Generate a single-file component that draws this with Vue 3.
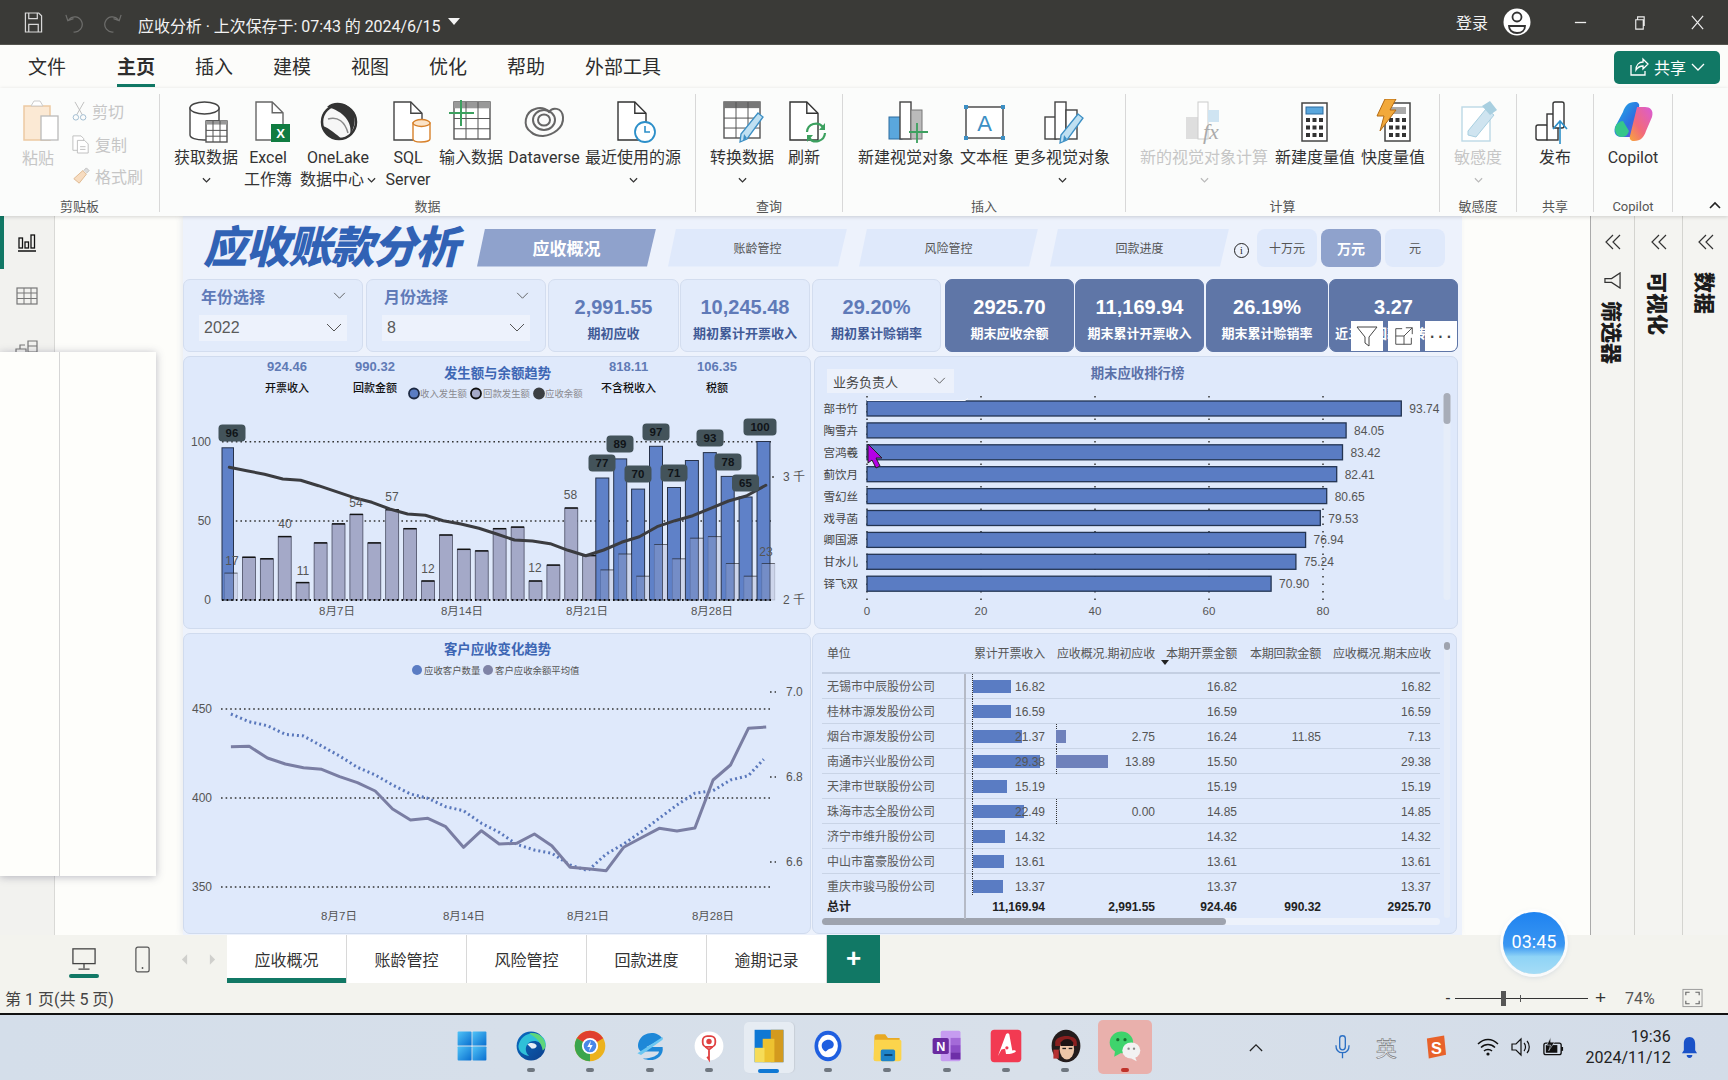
<script setup>
const zx1 = x => +(170 + x / 2.412).toFixed(1)
const zy1 = y => +(210 + y / 3).toFixed(1)
const zy3 = y => +(630 + y / 3).toFixed(1)

const doc = (x, y, w, h, c = '#444') =>
  `<path d="M${x} ${y}h${w * 0.6}l${w * 0.4} ${w * 0.4}V${y + h}H${x}Z" fill="#fff" stroke="${c}" stroke-width="1.4"/><path d="M${x + w * 0.6} ${y}v${w * 0.4}h${w * 0.4}" fill="none" stroke="${c}" stroke-width="1.4"/>`
const grid = (x, y, w, h, c = '#555', head = '#999') => {
  let s = `<rect x="${x}" y="${y}" width="${w}" height="${h}" fill="#fff" stroke="${c}" stroke-width="1.4"/><rect x="${x}" y="${y}" width="${w}" height="${h * 0.17}" fill="${head}"/>`
  for (let i = 1; i < 3; i++) s += `<path d="M${x + (w * i) / 3} ${y}v${h}" stroke="${c}" stroke-width="1"/>`
  for (let i = 1; i < 3; i++) s += `<path d="M${x} ${y + h * 0.17 + ((h * 0.83) * i) / 3}h${w}" stroke="${c}" stroke-width="1"/>`
  return s
}
const pencil = (x, y, c = '#3c8fc4') =>
  `<path d="M${x + 16} ${y}l5 4-16 22-7 3 1-8Z" fill="#bfe0f2" stroke="${c}" stroke-width="1.3"/><path d="M${x + 2} ${y + 21}l3 4-4 3Z" fill="${c}"/>`
const calc = (x, y, top) => {
  let s = `<rect x="${x}" y="${y}" width="25" height="38" fill="#fff" stroke="#444" stroke-width="1.5"/>`
  s += top
  for (let r = 0; r < 3; r++) for (let c = 0; c < 3; c++)
    s += `<rect x="${x + 4 + c * 6.5}" y="${y + 15 + r * 7.5}" width="4" height="4" fill="#333"/>`
  return s
}

const icons = {
  cyl: `<path d="M8 9v27c0 3 6 5 14 5h3V22h12V9Z" fill="#fff" stroke="#444" stroke-width="1.4"/><ellipse cx="22.500" cy="9" rx="14.500" ry="6" fill="#fff" stroke="#444" stroke-width="1.4"/>${grid(24, 22, 21, 21)}`,
  excel: `${doc(12, 3, 27, 38, '#666')}<rect x="27" y="25" width="19" height="18" fill="#107c41"/><text x="36.500" y="39" font-size="13" font-weight="700" text-anchor="middle" fill="#fff" font-family="Liberation Sans">X</text>`,
  lake: `<circle cx="25" cy="23" r="17" fill="#f6f6f6" stroke="#333" stroke-width="2.500"/><path d="M13 8C21 0 37 4 40 16c2 8-1 15-4 20 3-12-6-24-23-28Z" fill="#333"/><path d="M9 27c6 2 14 9 19 13-9 2-16-3-19-13Z" fill="#333"/><path d="M14 20c10-3 17 3 20 14" stroke="#888" fill="none" stroke-width="1.5"/>`,
  sql: `${doc(10, 3, 28, 38, '#444')}<path d="M29 24v16c0 2 4 3 8 3s9-1 9-3V24Z" fill="#fff" stroke="#d8822c" stroke-width="1.4"/><ellipse cx="37.500" cy="24" rx="8.500" ry="3.500" fill="#fbe3c8" stroke="#d8822c" stroke-width="1.4"/>`,
  enter: `${grid(7, 3, 36, 37, '#555', '#999')}<path d="M14 1v26M2 14h25" stroke="#3ca05f" stroke-width="2" fill="none"/>`,
  dv: `<g fill="none" stroke="#666" stroke-width="2"><path d="M11 33C2 27 5 13 15 10c6-2 11 0 14 3 3-5 13-5 14 5 1 11-10 18-20 19-5 0-9-1-12-4Z"/><ellipse cx="24" cy="21" rx="11" ry="10"/><ellipse cx="24" cy="21" rx="6" ry="5.500"/></g>`,
  recent: `${doc(9, 3, 28, 38, '#333')}<circle cx="36" cy="33" r="10" fill="#fff" stroke="#2c8fc9" stroke-width="1.8"/><path d="M36 27v6h5" fill="none" stroke="#2c8fc9" stroke-width="1.6"/>`,
  transform: `${grid(6, 3, 36, 36, '#555', '#777')}${pencil(24, 14)}`,
  refresh: `${doc(10, 3, 28, 38, '#333')}<g fill="none" stroke="#3ca05f" stroke-width="2.200"><path d="M27 33a9 9 0 0 1 16-5"/><path d="M45 34a9 9 0 0 1-16 5"/></g><path d="M45 24v7h-6ZM27 43v-7h6Z" fill="#3ca05f"/>`,
  newvis: `<rect x="7" y="18" width="13" height="22" fill="#5aa7dd" stroke="#2c6ca0"/><rect x="18" y="3" width="11" height="37" fill="#fff" stroke="#444" stroke-width="1.4"/><rect x="29" y="11" width="11" height="29" fill="#bbb" stroke="#777"/><path d="M35 24v20M27 33h19" stroke="#3ca05f" stroke-width="1.8" fill="none"/>`,
  textbox: `<rect x="6" y="8" width="37" height="31" fill="#fff" stroke="#333" stroke-width="1.3"/><g fill="#3c8fc4"><rect x="4" y="6" width="4" height="4"/><rect x="41" y="6" width="4" height="4"/><rect x="4" y="37" width="4" height="4"/><rect x="41" y="37" width="4" height="4"/></g><text x="24.500" y="32" font-size="22" text-anchor="middle" fill="#3c8fc4" font-family="Liberation Sans">A</text>`,
  morevis: `<rect x="7" y="18" width="11" height="22" fill="#fff" stroke="#444" stroke-width="1.4"/><rect x="17" y="3" width="11" height="37" fill="#fff" stroke="#444" stroke-width="1.4"/><rect x="28" y="11" width="11" height="29" fill="#fff" stroke="#444" stroke-width="1.4"/>${pencil(24, 15)}`,
  fx: `<rect x="6" y="18" width="12" height="22" fill="#dedede"/><rect x="18" y="3" width="10" height="37" fill="#fff" stroke="#ccc"/><rect x="28" y="11" width="11" height="12" fill="#cfe4f2"/><text x="23" y="40" font-size="22" font-style="italic" fill="#aaa" font-family="Liberation Serif">fx</text>`,
  measure: calc(11, 4, '<rect x="15" y="8" width="17" height="7" fill="#5aa7dd" stroke="#2c6ca0"/>'),
  quick: calc(16, 4, '<rect x="20" y="8" width="17" height="7" fill="#aaa"/>') + `<path d="M16 0h11l-6 11h6L11 32l4-15H8Z" fill="#f2a93b" stroke="#b36a12" stroke-width="1"/>`,
  sens: `<rect x="8" y="8" width="28" height="34" fill="#fff" stroke="#bcd9e6" stroke-width="1.4"/><path d="M14 32l18-22 8 6-18 22-8-2Z" fill="#cfe4f0" stroke="#a8cfe0"/><path d="M28 7l8-5 7 9-7 5Z" fill="#a8cfe0"/>`,
  publish: `<rect x="5" y="26" width="12" height="15" rx="2" fill="#fff" stroke="#333" stroke-width="1.4"/><rect x="16" y="15" width="11" height="26" fill="#fff" stroke="#333" stroke-width="1.4"/><rect x="22" y="3" width="11" height="26" rx="2" fill="#fff" stroke="#333" stroke-width="1.4"/><path d="M29 45V22m-7 8 7-8 7 8" fill="none" stroke="#2c8fc9" stroke-width="1.6"/>`,
  copilot: `<defs><linearGradient id="cpa" x1="0" y1="0" x2="1" y2="1"><stop offset="0" stop-color="#1fb6e8"/><stop offset="0.6" stop-color="#2e6fe0"/><stop offset="1" stop-color="#8a4bd8"/></linearGradient><linearGradient id="cpb" x1="1" y1="0" x2="0" y2="1"><stop offset="0" stop-color="#d95bd6"/><stop offset="0.6" stop-color="#f26a7a"/><stop offset="1" stop-color="#f8a63a"/></linearGradient></defs><path d="M26 3c-7 0-10 4-12 10L6 28c-2 7 2 10 7 10h9l8-30c1-3-1-5-4-5Z" fill="url(#cpa)"/><path d="M14 22c-3 0-8 3-8 8s3 8 7 8c4 0 6-3 7-6Z" fill="#36c68a"/><path d="M25 42c7 0 10-4 12-10l6-14c2-7-2-10-7-10h-8l-7 29c-1 3 1 5 4 5Z" fill="url(#cpb)"/>`,
}

const groups = [
  { w: 536, pad: 14, label: '数据', items: [
    { w: 64, icon: 'cyl', a: '获取数据', chev: true },
    { w: 60, icon: 'excel', a: 'Excel', b: '工作簿' },
    { w: 80, icon: 'lake', a: 'OneLake', b: '数据中心', bc: true },
    { w: 60, icon: 'sql', a: 'SQL', b: 'Server' },
    { w: 66, icon: 'enter', a: '输入数据' },
    { w: 80, icon: 'dv', a: 'Dataverse' },
    { w: 98, icon: 'recent', a: '最近使用的源', chev: true },
  ] },
  { w: 147, pad: 10, label: '查询', items: [
    { w: 72, icon: 'transform', a: '转换数据', chev: true },
    { w: 52, icon: 'refresh', a: '刷新' },
  ] },
  { w: 283, pad: 14, label: '插入', items: [
    { w: 98, icon: 'newvis', a: '新建视觉对象' },
    { w: 58, icon: 'textbox', a: '文本框' },
    { w: 98, icon: 'morevis', a: '更多视觉对象', chev: true },
  ] },
  { w: 314, pad: 13, label: '计算', items: [
    { w: 130, icon: 'fx', a: '新的视觉对象计算', chev: true, off: true },
    { w: 92, icon: 'measure', a: '新建度量值' },
    { w: 64, icon: 'quick', a: '快度量值' },
  ] },
  { w: 77, pad: 0, label: '敏感度', items: [{ w: 76, icon: 'sens', a: '敏感度', chev: true, off: true }] },
  { w: 77, pad: 0, label: '共享', items: [{ w: 76, icon: 'publish', a: '发布' }] },
  { w: 79, pad: 0, label: 'Copilot', items: [{ w: 78, icon: 'copilot', a: 'Copilot' }] },
]

const menus = ['文件', '主页', '插入', '建模', '视图', '优化', '帮助', '外部工具']
const navs = ['应收概况', '账龄管控', '风险管控', '回款进度']
const pages = ['应收概况', '账龄管控', '风险管控', '回款进度', '逾期记录']

const kpis = [
  { v: '2,991.55', l: '期初应收', w: 131, m: 2 },
  { v: '10,245.48', l: '期初累计开票收入', w: 130, m: 1 },
  { v: '29.20%', l: '期初累计赊销率', w: 129, m: 2 },
  { v: '2925.70', l: '期末应收余额', w: 129, m: 4, dark: true },
  { v: '11,169.94', l: '期末累计开票收入', w: 129, m: 1, dark: true },
  { v: '26.19%', l: '期末累计赊销率', w: 122, m: 2, dark: true },
  { v: '3.27', l: '近三月回款周转天数', w: 129, m: 1, dark: true, last: true },
]

const greys = [17,27,26,40,11,36,48,54,36,57,45,12,41,32,31,45,46,12,22,58,28,19,29,15,35,26,39,40,23,15,23]
const blues = { 0: 96, 21: 77, 22: 89, 23: 70, 24: 97, 25: 71, 26: 88, 27: 93, 28: 78, 29: 65, 30: 100 }
const vy = v => +(600 - v * 1.585).toFixed(1)
const greyBars = greys.map((v, i) => ({ x: +(224.5 + 17.91 * i).toFixed(1), y: vy(v), h: +(v * 1.585).toFixed(1), over: i >= 21 || i === 0 }))
const blueBars = Object.entries(blues).map(([i, v]) => ({ x: i == 0 ? 222 : +(224.5 + 17.91 * i - 4.8).toFixed(1), y: vy(v), h: +(v * 1.585).toFixed(1), w: i == 0 ? 11.5 : 13 }))
const line1 = [[143,772],[185,782],[228,793],[272,807],[315,811],[358,827],[401,845],[444,863],[487,877],[530,897],[573,912],[616,916],[659,932],[702,942],[745,955],[788,972],[831,990],[874,993],[917,1001],[960,1021],[1003,1037],[1046,1020],[1089,997],[1132,980],[1175,950],[1218,932],[1261,917],[1304,895],[1347,873],[1390,858],[1437,826]]
  .map(([x, y]) => `${zx1(x)},${zy1(y)}`).join(' ')
const pills = [[232,433,'96',27],[602,463,'77',27],[620,444,'89',27],[638,474,'70',27],[656,432,'97',27],[674,473,'71',27],[710,438,'93',27],[728,462,'78',27],[745.5,483,'65',27],[760,427,'100',33]]
const plain = [[232,561,'17'],[285,524,'40'],[303,571,'11'],[356,503,'54'],[392,497,'57'],[428,569,'12'],[535,568,'12'],[570.5,495,'58'],[766,552,'23']]
const heads = [
  { x: 287, v: '924.46', l: '开票收入' },
  { x: 375, v: '990.32', l: '回款金额' },
  { x: 628.6, v: '818.11', l: '不含税收入' },
  { x: 717, v: '106.35', l: '税额' },
]
const legend1 = [
  { cx: 414, tx: 420, f: '#5a7cc3', s: '#1e2a44', t: '收入发生额' },
  { cx: 476, tx: 483, f: '#a5aac8', s: '#111', t: '回款发生额' },
  { cx: 539, tx: 545, f: '#3c3f42', s: '#3c3f42', t: '应收余额' },
]
const ticks = [[337, '8月7日'], [462, '8月14日'], [587, '8月21日'], [712, '8月28日']]

const people = [['部书竹',93.74],['陶雪卉',84.05],['宫鸿羲',83.42],['蓟饮月',82.41],['雪幻丝',80.65],['戏寻菡',79.53],['卿国源',76.94],['甘水儿',75.24],['铎飞双',70.90]]
  .map(([n, v], i) => ({ n, v, y: +(401 + i * 21.9).toFixed(1), w: +(v * 5.7).toFixed(1) }))
const rankX = [867, 981, 1095, 1209, 1323]

const solid = [[147,350],[191,349],[235,384],[278,402],[322,413],[366,418],[409,440],[452,458],[495,483],[537,537],[580,570],[622,565],[665,590],[708,652],[751,602],[794,642],[836,640],[879,612],[921,647],[965,712],[1008,716],[1052,722],[1094,652],[1137,623],[1180,595],[1223,603],[1266,594],[1310,450],[1352,405],[1395,295],[1438,291]]
  .map(([x, y]) => `${zx1(x)},${zy3(y)}`).join(' ')
const dotted = [[147,252],[191,275],[235,287],[278,313],[322,318],[366,348],[409,378],[452,412],[495,435],[537,465],[580,492],[622,505],[665,530],[708,542],[751,580],[794,607],[836,643],[879,660],[921,670],[965,705],[1008,722],[1052,672],[1094,642],[1137,605],[1180,565],[1223,525],[1266,490],[1310,482],[1352,450],[1395,437],[1432,388]]
  .map(([x, y]) => `${zx1(x)},${zy3(y)}`).join(' ')
const ticks3 = [[339, '8月7日'], [464, '8月14日'], [588, '8月21日'], [713, '8月28日']]

const rows = [
  ['无锡市中辰股份公司', 16.82, null, '16.82', '', '16.82'],
  ['桂林市源发股份公司', 16.59, null, '16.59', '', '16.59'],
  ['烟台市源发股份公司', 21.37, 2.75, '16.24', '11.85', '7.13'],
  ['南通市兴业股份公司', 29.38, 13.89, '15.50', '', '29.38'],
  ['天津市世联股份公司', 15.19, null, '15.19', '', '15.19'],
  ['珠海市志全股份公司', 22.49, 0, '14.85', '', '14.85'],
  ['济宁市维升股份公司', 14.32, null, '14.32', '', '14.32'],
  ['中山市富豪股份公司', 13.61, null, '13.61', '', '13.61'],
  ['重庆市骏马股份公司', 13.37, null, '13.37', '', '13.37'],
]

const tray = [
  `<defs><linearGradient id="w1" x1="0" y1="0" x2="1" y2="1"><stop offset="0" stop-color="#4fc3f7"/><stop offset="1" stop-color="#0a6fd0"/></linearGradient></defs><rect x="4" y="4" width="15.500" height="15.500" rx="1" fill="url(#w1)"/><rect x="20.500" y="4" width="15.500" height="15.500" rx="1" fill="url(#w1)"/><rect x="4" y="20.500" width="15.500" height="15.500" rx="1" fill="url(#w1)"/><rect x="20.500" y="20.500" width="15.500" height="15.500" rx="1" fill="url(#w1)"/>`,
  `<defs><linearGradient id="e1" x1="0" y1="0" x2="1" y2="1"><stop offset="0" stop-color="#0a6cc2"/><stop offset="1" stop-color="#0c3f8c"/></linearGradient></defs><circle cx="20" cy="20" r="16" fill="url(#e1)"/><path d="M6 20C8 8 20 3 30 8c6 3 8 10 5 15-4-9-14-11-19-5-3 4-2 10 2 13-7-1-12-5-12-11Z" fill="#2fc0d8"/><path d="M18 6c8-2 17 3 18 13 0 3-1 5-3 6-1-9-8-15-15-19Z" fill="#5fd67a"/><path d="M16 18c3-2 8-2 10 1 1 3-2 4-5 4" fill="#fff" opacity=".9"/>`,
  `<circle cx="20" cy="20" r="17" fill="#ecb21d"/><path d="M20 20 5.300 11.500A17 17 0 0 1 34.700 11.500Z" fill="#e0402e"/><path d="M20 20 5.300 11.500A17 17 0 0 0 20 37Z" fill="#3aa54d"/><circle cx="20" cy="20" r="8" fill="#4a87e8" stroke="#fff" stroke-width="2"/><path d="M21 14l-4 7h3l-1 5 4-7h-3Z" fill="#fff"/>`,
  `<path d="M8 14C12 4 28 2 34 12L16 21 34 21C36 32 24 39 12 34 22 34 30 30 30 26H10C6 24 6 18 8 14Z" fill="#1e88d8"/><path d="M6 28 34 10 34 13 10 30Z" fill="#6bc7f2"/>`,
  `<circle cx="20" cy="20" r="16" fill="#fff"/><rect x="13" y="9" width="14" height="12" rx="5" fill="none" stroke="#e04040" stroke-width="2"/><circle cx="20" cy="15" r="3" fill="#e04040"/><path d="M16 21l4 3 4-3M20 24v11l-2-3" fill="none" stroke="#e04040" stroke-width="2"/>`,
  `<rect x="4" y="2" width="32" height="36" fill="#0f78d4"/><rect x="22" y="2" width="14" height="36" fill="#d39a1e"/><rect x="13" y="12" width="13" height="26" fill="#edc230"/><rect x="4" y="22" width="11" height="16" fill="#f6dc58"/>`,
  `<ellipse cx="20" cy="20" rx="15" ry="17" fill="#1f5fe0"/><ellipse cx="20" cy="20" rx="11" ry="12.500" fill="#fff"/><path d="M13 20c0-6 8-9 12-5 3 3 1 8-3 8-2 0-3 3-5 3-2-1-4-3-4-6Z" fill="#1f5fe0"/>`,
  `<path d="M6 10c0-2 1-3 3-3h9l3 4h13v25H6Z" fill="#e8a923"/><path d="M6 13h28c1 0 2 1 2 2v19c0 2-1 3-3 3H8c-2 0-3-1-3-3Z" fill="#fbd44c"/><rect x="13" y="24" width="16" height="13" rx="2" fill="#1e84c9"/><rect x="17" y="29" width="9" height="2" fill="#0a3f6a"/>`,
  `<rect x="13" y="3" width="22" height="34" rx="2" fill="#c69cf0"/><rect x="24" y="11" width="11" height="8" fill="#a46ad8"/><rect x="24" y="19" width="11" height="8" fill="#8c4dc6"/><rect x="24" y="27" width="11" height="8" fill="#6e2ea8"/><rect x="4" y="11" width="18" height="18" rx="2" fill="#6a2aa0"/><text x="13" y="25" font-size="14" font-weight="700" text-anchor="middle" fill="#fff" font-family="Liberation Sans">N</text>`,
  `<rect x="3" y="2" width="34" height="36" rx="4" fill="#f23a52"/><path d="M11 31 20 7c2-2 4-1 4 2l3 16c3-1 4 0 4 1-4 3-8 3-11 3l-1-6-4 1-4 7Z" fill="#fff"/><circle cx="21" cy="22" r="1.800" fill="#f23a52"/>`,
  `<ellipse cx="20" cy="20" rx="16" ry="18" fill="#241c1c"/><path d="M8 16c0-9 24-10 24 0v4H8Z" fill="#8a1f1f"/><ellipse cx="21" cy="24" rx="8" ry="11" fill="#edc6a8"/><path d="M14 16c4-5 11-5 14 0v4H14Z" fill="#1c1414"/><path d="M6 24h6v10H6Z" fill="#b53030"/><rect x="16" y="22" width="4" height="1.500" fill="#222"/><rect x="23" y="22" width="4" height="1.500" fill="#222"/>`,
  `<ellipse cx="16" cy="16" rx="13" ry="12" fill="#3fd36c"/><path d="M9 25l-1 7 7-4Z" fill="#3fd36c"/><circle cx="12" cy="13" r="1.800" fill="#16732f"/><circle cx="20" cy="13" r="1.800" fill="#16732f"/><ellipse cx="27" cy="25" rx="10" ry="9" fill="#f2f2f2"/><path d="M31 32l2 5-6-3Z" fill="#f2f2f2"/><circle cx="24" cy="23" r="1.300" fill="#888"/><circle cx="30" cy="23" r="1.300" fill="#888"/>`,
]
</script>

<template>
  <div class="app">
    <header class="title">
      <svg class="ti ti-save" viewBox="0 0 20 24"><path d="M1.500 2h14l3 3v17h-17Z" fill="none" stroke="#d8d8d8" stroke-width="1.300"/><path d="M5 2v6h9V2M5 22v-8h10v8" fill="none" stroke="#d8d8d8" stroke-width="1.300"/></svg>
      <svg class="ti ti-undo" viewBox="0 0 20 24"><path d="M5 9a8 8 0 1 1 5 13M2 4l2 6 6-2" fill="none" stroke="#6d6d6b" stroke-width="1.300"/></svg>
      <svg class="ti ti-redo" viewBox="0 0 20 24"><path d="M15 9a8 8 0 1 0-5 13M18 4l-2 6-6-2" fill="none" stroke="#6d6d6b" stroke-width="1.300"/></svg>
      <span class="doc-name">应收分析 · 上次保存于: 07:43 的 2024/6/15</span>
      <span class="tri"></span>
      <span class="spacer"></span>
      <span class="login">登录</span>
      <svg class="avatar" viewBox="0 0 28 28"><circle cx="14" cy="14" r="13.500" fill="#fff"/><circle cx="14" cy="9" r="4.500" fill="none" stroke="#333" stroke-width="1.800"/><path d="M6 18h16c0 4-3 7-8 7s-8-3-8-7Z" fill="none" stroke="#333" stroke-width="1.800"/></svg>
      <svg class="wb wb-min" viewBox="0 0 16 16"><path d="M2 8h12" stroke="#eee" stroke-width="1.400"/></svg>
      <svg class="wb wb-max" viewBox="0 0 16 16"><path d="M4 5h8v10H4ZM6 5V2h7v9h-1" fill="none" stroke="#eee" stroke-width="1.200"/></svg>
      <svg class="wb wb-close" viewBox="0 0 16 16"><path d="M2 1l12 14M14 1 2 15" stroke="#eee" stroke-width="1.300"/></svg>
    </header>

    <nav class="menu">
      <span v-for="(m, i) in menus" :key="m" class="menu-item" :class="{ on: i === 1 }">{{ m }}</span>
      <span class="spacer"></span>
      <button class="share">
        <svg viewBox="0 0 20 20" width="20" height="20"><path d="M2 8v10h14v-4M7 13c0-5 3-8 7-8V2l5 5-5 5V9c-3 0-5 1-7 4Z" fill="none" stroke="#fff" stroke-width="1.300"/></svg>
        <span>共享</span>
        <svg viewBox="0 0 14 9" width="14" height="9"><path d="M1 1l6 6 6-6" fill="none" stroke="#fff" stroke-width="1.300"/></svg>
      </button>
    </nav>

    <section class="ribbon">
      <div class="group clip">
        <div class="clip-body">
          <div class="paste">
            <svg viewBox="0 0 40 44" width="40" height="44"><rect x="3" y="8" width="26" height="34" fill="#fbe9d4" stroke="#edc9a2" stroke-width="1.500"/><path d="M10 8l3-5h6l3 5Z" fill="#fff" stroke="#ccc"/><rect x="20" y="18" width="17" height="24" fill="#fff" stroke="#bbb" stroke-width="1.300"/></svg>
            <span>粘贴</span>
          </div>
          <div class="clip-list">
            <div><svg viewBox="0 0 16 22" width="15" height="20"><path d="M3 1l8 14M13 1 5 15" stroke="#bbb" fill="none"/><circle cx="4" cy="18" r="3" fill="none" stroke="#9bb7cd"/><circle cx="12" cy="18" r="3" fill="none" stroke="#9bb7cd"/></svg><span>剪切</span></div>
            <div><svg viewBox="0 0 20 22" width="18" height="20"><path d="M1 2h9l3 3v13H1Z" fill="#fff" stroke="#bbb"/><path d="M6 7h8l4 4v10H6Z" fill="#fff" stroke="#bbb"/><path d="M9 14h6M9 17h6" stroke="#bbb"/></svg><span>复制</span></div>
            <div><svg viewBox="0 0 20 22" width="18" height="20"><path d="M2 14 12 5l4 4-8 10Z" fill="#f7dcc0" stroke="#ddb68c"/><path d="M13 5l3-3 3 3-3 3" fill="#ddd" stroke="#bbb"/></svg><span>格式刷</span></div>
          </div>
        </div>
        <div class="group-label">剪贴板</div>
      </div>
      <div v-for="g in groups" :key="g.label" class="group" :style="{ width: g.w + 'px', paddingLeft: g.pad + 'px' }">
        <div class="items">
          <div v-for="it in g.items" :key="it.a" class="item" :class="{ off: it.off }" :style="{ width: it.w + 'px' }">
            <svg class="rb-icon" viewBox="0 0 48 48" v-html="icons[it.icon]"></svg>
            <div class="lbl">{{ it.a }}</div>
            <div class="lbl">
              {{ it.b }}
              <svg v-if="it.chev || it.bc" class="mini" viewBox="0 0 10 7"><path d="M1 1l4 4 4-4" fill="none" :stroke="it.off ? '#bbb' : '#333'" stroke-width="1.400"/></svg>
            </div>
          </div>
        </div>
        <div class="group-label" :style="{ marginLeft: -g.pad + 'px' }">{{ g.label }}</div>
      </div>
      <svg class="collapse" viewBox="0 0 12 8"><path d="M1 7l5-5 5 5" fill="none" stroke="#222" stroke-width="1.600"/></svg>
    </section>

    <main class="main">
      <aside class="rail">
        <div class="rail-btn active">
          <svg viewBox="0 0 20 20" width="20" height="20"><path d="M1 18h18" stroke="#111" stroke-width="1.500"/><g fill="none" stroke="#111" stroke-width="1.300"><rect x="2" y="5" width="3.500" height="10"/><rect x="8" y="9" width="3.500" height="6"/><rect x="14" y="2" width="3.500" height="13"/></g></svg>
        </div>
        <div class="rail-btn">
          <svg viewBox="0 0 22 18" width="22" height="18"><rect x="1" y="1" width="20" height="16" fill="none" stroke="#777" stroke-width="1.200"/><path d="M1 6h20M1 11.500h20M8 1v16M15 1v16" stroke="#777"/></svg>
        </div>
        <div class="rail-btn">
          <svg viewBox="0 0 24 18" width="24" height="18"><path d="M1 9h10v8H1ZM5 9V5h5M13 1h9v5h-9ZM13 6h9v6h-9Z" fill="none" stroke="#777" stroke-width="1.200"/></svg>
        </div>
      </aside>
      <div class="popup"><i></i></div>

      <div class="canvas">
        <div class="report">
          <div class="rp-head">
            <h1 class="rp-title">应收账款分析</h1>
            <div class="navs">
              <span v-for="(n, i) in navs" :key="n" class="nav" :class="{ on: i === 0 }">{{ n }}</span>
            </div>
            <span class="info">i</span>
            <div class="units">
              <span class="unit">十万元</span>
              <span class="unit on">万元</span>
              <span class="unit">元</span>
            </div>
          </div>

          <div class="kpis">
            <div class="card slicer">
              <div class="sl-top"><b>年份选择</b><svg class="chev" viewBox="0 0 14 9"><path d="M1 1l6 6 6-6" fill="none" stroke="#555"/></svg></div>
              <div class="sl-box"><span>2022</span><svg class="chev big" viewBox="0 0 16 10"><path d="M1 1l7 7 7-7" fill="none" stroke="#555"/></svg></div>
            </div>
            <div class="card slicer second">
              <div class="sl-top"><b>月份选择</b><svg class="chev" viewBox="0 0 14 9"><path d="M1 1l6 6 6-6" fill="none" stroke="#555"/></svg></div>
              <div class="sl-box"><span>8</span><svg class="chev big" viewBox="0 0 16 10"><path d="M1 1l7 7 7-7" fill="none" stroke="#555"/></svg></div>
            </div>
            <div v-for="k in kpis" :key="k.l" class="card kpi" :class="{ dark: k.dark }" :style="{ width: k.w + 'px', marginLeft: k.m + 'px' }">
              <div class="kv">{{ k.v }}</div>
              <div class="kl">{{ k.l }}</div>
              <div v-if="k.last" class="tiles">
                <span class="tile"><svg viewBox="0 0 24 24" width="24" height="24"><path d="M2 3h20l-8 10v9l-4-3v-6Z" fill="none" stroke="#444" stroke-width="1"/></svg></span>
                <span class="tile"><svg viewBox="0 0 24 24" width="22" height="22"><path d="M10 4H3v17h17v-7M3 12h9v9M14 3h7v7M21 3l-9 9" fill="none" stroke="#444" stroke-width="1"/></svg></span>
                <span class="tile dots">···</span>
              </div>
            </div>
          </div>

          <div class="row-a">
            <div class="panel left">
              <svg class="fill" viewBox="183 356 628 273">
                <g v-for="h in heads" :key="h.l">
                  <text :x="h.x" y="371" class="hv">{{ h.v }}</text>
                  <text :x="h.x" y="392" class="hl">{{ h.l }}</text>
                </g>
                <text x="497.500" y="378" class="ptitle">发生额与余额趋势</text>
                <g v-for="l in legend1" :key="l.t">
                  <circle :cx="l.cx" cy="393.500" r="5" :fill="l.f" :stroke="l.s" stroke-width="1.800"/>
                  <text :x="l.tx" y="397" class="leg">{{ l.t }}</text>
                </g>
                <path d="M222 441.700H773M222 521H773" class="dots-h"/>
                <rect v-for="b in blueBars" :key="'b' + b.x" :x="b.x" :y="b.y" :width="b.w" :height="b.h" class="bar-blue"/>
                <g v-for="b in greyBars" :key="'g' + b.x">
                  <rect :x="b.x" :y="b.y" width="13" :height="b.h" :class="b.over ? 'bar-over' : 'bar-grey'"/>
                  <path :d="`M${b.x} ${b.y}h13`" :class="b.over ? 'bar-top faint' : 'bar-top'"/>
                </g>
                <path d="M222 600H773" class="dots-h strong"/>
                <polyline :points="line1" class="bal"/>
                <g v-for="p in pills" :key="p[2]">
                  <rect :x="p[0] - p[3] / 2" :y="p[1] - 8.500" :width="p[3]" height="17" rx="4" class="pill"/>
                  <text :x="p[0]" :y="p[1] + 4" class="pill-t">{{ p[2] }}</text>
                </g>
                <text v-for="p in plain" :key="p[0]" :x="p[0]" :y="p[1] + 4" class="val">{{ p[2] }}</text>
                <text x="211" y="445.500" class="axis end">100</text>
                <text x="211" y="525" class="axis end">50</text>
                <text x="211" y="604" class="axis end">0</text>
                <text x="783" y="481" class="axis start">3 千</text>
                <text x="783" y="604" class="axis start">2 千</text>
                <circle cx="773" cy="477" r="1" fill="#444"/>
                <text v-for="t in ticks" :key="t[0]" :x="t[0]" y="615" class="axis mid">{{ t[1] }}</text>
              </svg>
            </div>

            <div class="panel right">
              <div class="rank-select"><span>业务负责人</span><svg class="chev" viewBox="0 0 14 9"><path d="M1 1l6 6 6-6" fill="none" stroke="#555"/></svg></div>
              <svg class="fill" viewBox="814 356 644 273">
                <text x="1137.500" y="378" class="ptitle muted">期末应收排行榜</text>
                <path v-for="x in rankX" :key="x" :d="`M${x} 396V604`" class="dots-v"/>
                <g v-for="p in people" :key="p.n">
                  <text x="858" :y="p.y + 12" class="name">{{ p.n }}</text>
                  <rect x="867" :y="p.y" :width="p.w" height="15" class="rank"/>
                  <text :x="867 + p.w + 8" :y="p.y + 12" class="rv">{{ p.v.toFixed(2) }}</text>
                </g>
                <path d="M867 400.500H965l3-2" fill="none" stroke="#f4f7fd" stroke-width="1"/>
                <text v-for="(x, i) in rankX" :key="'t' + x" :x="x" y="615" class="axis mid">{{ i * 20 }}</text>
                <rect x="1443.500" y="393" width="7" height="207" rx="3.500" fill="#e6edf9"/>
                <rect x="1443.500" y="393" width="7" height="31" rx="3.500" fill="#a8adb8"/>
                <path d="M868 444l0 19 4-3 4 8 4-2-4-8 6 0Z" fill="#b400e6" stroke="#222" stroke-width="1"/>
              </svg>
            </div>
          </div>

          <div class="row-b">
            <div class="panel left tall">
              <svg class="fill" viewBox="183 633 628 301">
                <text x="497.500" y="654" class="ptitle">客户应收变化趋势</text>
                <circle cx="417" cy="670" r="5" fill="#5a7cc3"/><text x="424" y="674" class="leg dark">应收客户数量</text>
                <circle cx="488" cy="670" r="5" fill="#7f83a6"/><text x="495" y="674" class="leg dark">客户应收余额平均值</text>
                <path d="M221 709H773M221 798H773M221 887H773" class="dots-h"/>
                <polyline :points="dotted" class="dotline"/>
                <polyline :points="solid" class="solid"/>
                <text x="212" y="713" class="axis end">450</text>
                <text x="212" y="802" class="axis end">400</text>
                <text x="212" y="891" class="axis end">350</text>
                <path d="M770 692h6M770 777h6M770 862h6" class="dots-h"/>
                <text x="786" y="696" class="axis start">7.0</text>
                <text x="786" y="781" class="axis start">6.8</text>
                <text x="786" y="866" class="axis start">6.6</text>
                <text v-for="t in ticks3" :key="t[0]" :x="t[0]" y="920" class="axis mid">{{ t[1] }}</text>
              </svg>
            </div>

            <div class="panel table">
              <div class="t-row t-head">
                <span class="first">单位</span>
                <span>累计开票收入</span><span>应收概况.期初应收</span><span class="sorted">本期开票金额</span><span>本期回款金额</span><span>应收概况.期末应收</span>
              </div>
              <div class="t-body">
                <div v-for="r in rows" :key="r[0]" class="t-row">
                  <span class="first name-cell">{{ r[0] }}</span>
                  <span class="barcell">
                    <i class="line"></i><i class="dbar" :style="{ width: (r[1] * 2.3) + 'px' }"></i>
                    <em>{{ r[1].toFixed(2) }}</em>
                  </span>
                  <span class="barcell second-bar">
                    <template v-if="r[2] !== null">
                      <i class="line"></i><i class="dbar alt" :style="{ width: (r[2] * 3.8) + 'px' }"></i>
                      <em>{{ r[2].toFixed(2) }}</em>
                    </template>
                  </span>
                  <span>{{ r[3] }}</span><span>{{ r[4] }}</span><span>{{ r[5] }}</span>
                </div>
              </div>
              <div class="t-row t-total">
                <span class="first">总计</span>
                <span>11,169.94</span><span>2,991.55</span><span>924.46</span><span>990.32</span><span>2925.70</span>
              </div>
              <div class="hscroll"><i></i></div>
              <div class="vscroll"><i></i></div>
            </div>
          </div>
        </div>
        <div class="timer"><span>03:45</span></div>
      </div>

      <aside class="panes">
        <div class="pane p-filter">
          <svg class="dbl" viewBox="0 0 18 16"><path d="M9 1 2 8l7 7M16 1 9 8l7 7" fill="none" stroke="#333" stroke-width="1.200"/></svg>
          <svg class="fun" viewBox="0 0 18 18" width="17" height="17"><path d="M17 1v16L8 11H1V7h7Z" fill="none" stroke="#333" stroke-width="1.300"/></svg>
          <b>筛选器</b>
        </div>
        <div class="pane p-vis"><svg class="dbl" viewBox="0 0 18 16"><path d="M9 1 2 8l7 7M16 1 9 8l7 7" fill="none" stroke="#333" stroke-width="1.200"/></svg><b>可视化</b></div>
        <div class="pane p-data"><svg class="dbl" viewBox="0 0 18 16"><path d="M9 1 2 8l7 7M16 1 9 8l7 7" fill="none" stroke="#333" stroke-width="1.200"/></svg><b>数据</b></div>
      </aside>
    </main>

    <div class="tabbar">
      <div class="tb-view">
        <span class="view-btn on"><svg viewBox="0 0 28 26" width="26" height="24"><rect x="2" y="2" width="24" height="16" fill="none" stroke="#444" stroke-width="1.400"/><path d="M14 18v5M8 24h12" stroke="#444" stroke-width="1.400"/></svg></span>
        <span class="view-btn"><svg viewBox="0 0 18 28" width="17" height="27"><rect x="2" y="1" width="14" height="26" rx="2" fill="none" stroke="#555" stroke-width="1.300"/><circle cx="9" cy="23" r="1" fill="#555"/></svg></span>
        <span class="arrow"><svg viewBox="0 0 8 14" width="7" height="13"><path d="M7 1 1 7l6 6Z" fill="#cfcfcc"/></svg></span><span class="arrow"><svg viewBox="0 0 8 14" width="7" height="13"><path d="M1 1l6 6-6 6Z" fill="#cfcfcc"/></svg></span>
      </div>
      <div class="page-tabs">
        <span v-for="(p, i) in pages" :key="p" class="page-tab" :class="{ on: i === 0 }">{{ p }}</span>
        <span class="page-add">+</span>
      </div>
      <span class="tb-rest"></span>
    </div>

    <footer class="status">
      <span>第 1 页(共 5 页)</span>
      <span class="spacer"></span>
      <span class="z-sign">-</span>
      <span class="slider"><i class="mid"></i><i class="thumb"></i></span>
      <span class="z-sign plus">+</span>
      <span class="pct">74%</span>
      <svg class="fit" viewBox="0 0 22 20"><rect x="1" y="1" width="20" height="18" fill="none" stroke="#999"/><path d="M4 7V4h4M18 7V4h-4M4 13v3h4M18 13v3h-4" fill="none" stroke="#666" stroke-width="1.200"/></svg>
    </footer>

    <div class="taskbar">
      <div class="tk-apps">
        <div v-for="(t, i) in tray" :key="i" class="tk" :class="{ act: i === 5, wechat: i === 11 }">
          <svg viewBox="0 0 40 40" width="36" height="36" v-html="t"></svg>
          <i v-if="i > 0" class="dot"></i>
        </div>
      </div>
      <div class="tk-tray">
        <svg class="t-up" viewBox="0 0 16 10"><path d="M1 9l7-7 7 7" fill="none" stroke="#222" stroke-width="1.400"/></svg>
        <svg class="t-mic" viewBox="0 0 16 26"><rect x="5" y="1" width="6" height="15" rx="3" fill="none" stroke="#2a6fc4" stroke-width="1.400"/><path d="M1 11c0 6 3 8 7 8s7-2 7-8M8 19v6" fill="none" stroke="#2a6fc4" stroke-width="1.400"/></svg>
        <span class="t-ime">英</span>
        <svg class="t-sogou" viewBox="0 0 24 26"><path d="M3 4 21 1 23 21 5 25Z" fill="#e8622a"/><text x="13" y="20" font-size="17" font-weight="700" text-anchor="middle" fill="#fff" font-family="Liberation Sans">S</text></svg>
        <svg class="t-wifi" viewBox="0 0 22 20"><path d="M1 7c6-6 14-6 20 0M4 10.500c4-4 10-4 14 0M7 14c2-2 6-2 8 0" fill="none" stroke="#111" stroke-width="1.500"/><circle cx="11" cy="17" r="1.600" fill="#111"/></svg>
        <svg class="t-vol" viewBox="0 0 22 20"><path d="M2 7h4l5-5v16l-5-5H2Z" fill="none" stroke="#111" stroke-width="1.200"/><path d="M14 6c2 2 2 6 0 8M17 4c3 3 3 9 0 12" fill="none" stroke="#111" stroke-width="1.200"/></svg>
        <svg class="t-bat" viewBox="0 0 24 20"><rect x="2" y="6" width="18" height="12" rx="2" fill="none" stroke="#111" stroke-width="1.400"/><rect x="4" y="8" width="12" height="8" fill="#111"/><rect x="20" y="10" width="2" height="4" fill="#111"/><path d="M9 0 5 8h4l-2 6 6-9H9Z" fill="#111" stroke="#d5dde8" stroke-width=".6"/></svg>
        <div class="clock"><div>19:36</div><div>2024/11/12</div></div>
        <svg class="t-bell" viewBox="0 0 18 24"><path d="M9 1c-4 0-6 3-6 7v7l-2 3h16l-2-3V8c0-4-2-7-6-7Z" fill="#1a52c8"/><path d="M6 20h6c0 2-1 3-3 3s-3-1-3-3Z" fill="#1a52c8"/></svg>
      </div>
    </div>
  </div>
</template>

<style scoped>
.app {
  width: 1728px; height: 1080px; display: flex; flex-direction: column; overflow: hidden;
  font-family: Roboto, "Noto Sans CJK SC", sans-serif; color: #333; background: #fcfcf9;
}
.spacer { flex: 1; }

/* title bar */
.title { height: 45px; flex: none; background: #3a3a37; display: flex; align-items: center; color: #f2f2f2; font-size: 16px; border-bottom: 1px solid #55554f; box-sizing: border-box; }
.ti { width: 19px; height: 23px; flex: none; }
.ti-save { margin-left: 24px; }
.ti-undo { margin-left: 21px; }
.ti-redo { margin-left: 21px; }
.doc-name { margin-left: 15px; margin-top: 5px; font-size: 16px; white-space: nowrap; letter-spacing: -0.05px; }
.tri { width: 0; height: 0; border-left: 6px solid transparent; border-right: 6px solid transparent; border-top: 7px solid #f4f4f4; margin-left: 8px; margin-top: -2px; }
.login { margin-right: 15px; }
.avatar { width: 28px; height: 28px; }
.wb { width: 15px; height: 15px; flex: none; }
.wb-min { margin-left: 42px; }
.wb-max { margin-left: 44px; }
.wb-close { margin-left: 43px; margin-right: 23px; }

/* menu */
.menu { height: 43px; flex: none; display: flex; align-items: center; background: #fcfcfa; padding-left: 28px; position: relative; }
.menu-item { font-size: 19px; margin-right: 40px; color: #2d2d2d; line-height: 45px; height: 43px; position: relative; white-space: nowrap; }
.menu-item:first-child { margin-right: 51px; }
.menu-item.on { font-weight: 700; }
.menu-item.on::after { content: ""; position: absolute; left: 0; right: 0; bottom: 1px; height: 3px; background: #117865; }
.share { width: 106px; height: 33px; margin-right: 8px; margin-top: 1px; background: #117865; border: 0; border-radius: 5px; color: #fff; display: flex; align-items: center; justify-content: center; gap: 5px; font: 16px "Noto Sans CJK SC", sans-serif; padding: 0; }

/* ribbon */
.ribbon { height: 128px; flex: none; background: #fbfcfb; display: flex; position: relative; box-shadow: 0 1px 4px rgba(0, 0, 0, .16); z-index: 3; box-sizing: border-box; }
.group { height: 118px; margin-top: 6px; border-right: 1px solid #d8d8d8; display: flex; flex-direction: column; flex: none; box-sizing: border-box; }
.group-label { height: 20px; line-height: 20px; margin-bottom: -5px; font-size: 13px; color: #555; text-align: center; white-space: nowrap; }
.items { flex: 1; display: flex; min-height: 0; }
.item { padding-top: 5px; display: flex; flex-direction: column; align-items: center; flex: none; font-size: 16px; color: #333; box-sizing: border-box; white-space: nowrap; }
.item.off { color: #c6c6c6; }
.rb-icon { width: 48px; height: 48px; flex: none; }
.lbl { height: 22px; line-height: 22px; display: flex; align-items: center; gap: 3px; }
.mini { width: 9px; height: 7px; }
.clip { width: 160px; }
.clip-body { flex: 1; display: flex; }
.paste { width: 66px; padding-left: 21px; box-sizing: border-box; display: flex; flex-direction: column; align-items: flex-start; padding-top: 4px; color: #c6c6c6; font-size: 16px; }
.paste span { margin-top: 3px; margin-left: 1px; }
.clip-list { padding-top: 1px; margin-left: 6px; color: #c6c6c6; font-size: 16px; }
.clip-list div { height: 32.500px; display: flex; align-items: center; gap: 5px; }
.collapse { position: absolute; left: 1709px; top: 113px; width: 12px; height: 8px; }

/* main */
.main { height: 719px; flex: none; display: flex; min-height: 0; position: relative; }
.rail { width: 55px; flex: none; background: #f2f2ef; border-right: 1px solid #d9d9d6; box-sizing: border-box; }
.rail-btn { height: 53px; display: flex; align-items: center; justify-content: center; }
.rail-btn.active { box-shadow: inset 4px 0 0 #117865; }
.popup { position: absolute; left: 0; top: 136px; width: 156px; height: 524px; background: #fefefb; box-shadow: 0 1px 8px rgba(60, 60, 90, .35); z-index: 2; }
.popup i { position: absolute; left: 59px; top: 0; bottom: 0; width: 1px; background: #d6d6d6; }
.canvas { flex: 1; background: #fdfdfa; padding-left: 128px; position: relative; min-width: 0; }
.report { width: 1279px; height: 719px; background: #edf2fc; box-shadow: -2px 0 6px rgba(150, 160, 190, .18); padding-right: 4px; box-sizing: border-box; }
.rp-head { height: 63px; display: flex; align-items: center; }
.rp-title { margin: 0 0 0 20px; width: 274px; font-size: 44px; line-height: 50px; font-weight: 900; font-style: italic; color: #3162b5; letter-spacing: -1.500px; white-space: nowrap; flex: none; }
.navs { display: flex; gap: 12px; }
.nav { width: 179px; height: 38px; background: #dfe9fb; display: flex; align-items: center; justify-content: center; color: #555; font-size: 12px; clip-path: polygon(8px 0, 100% 0, calc(100% - 9px) 100%, 0 100%); }
.nav.on { background: #8fa2cc; color: #fff; font-weight: 700; font-size: 17px; }
.info { width: 13px; height: 13px; margin-left: 5px; border: 1.200px solid #222; border-radius: 50%; font: 10px/13px "Liberation Serif", serif; text-align: center; color: #222; flex: none; margin-top: 6px; }
.units { display: flex; gap: 4px; margin-left: 8px; }
.unit { width: 60px; height: 38px; border-radius: 8px; background: #dfe9fb; display: flex; align-items: center; justify-content: center; font-size: 12px; color: #555; }
.unit.on { background: #8fa2cc; color: #fff; font-weight: 700; font-size: 14px; }

.kpis { height: 73px; display: flex; }
.card { background: #e2ebfb; border: 1px solid #d3ddef; border-radius: 7px; box-sizing: border-box; flex: none; position: relative; }
.slicer { width: 180px; height: 73px; padding: 0 0 0 17px; }
.slicer.second { margin-left: 3px; padding-left: 17px; }
.sl-top { height: 32px; display: flex; align-items: center; justify-content: space-between; padding-right: 16px; }
.sl-top b { font-size: 16px; color: #5f7ab8; font-weight: 700; }
.chev { width: 13px; height: 8px; flex: none; }
.chev.big { width: 16px; height: 10px; }
.sl-box { height: 26px; background: #edf2fc; margin: 3px 15px 0 -2px; display: flex; align-items: center; justify-content: space-between; padding: 0 5px; font-size: 16px; color: #5a5a5a; font-family: "Liberation Sans", sans-serif; }
.kpi { text-align: center; font-family: "Liberation Sans", "Noto Sans CJK SC", sans-serif; padding-top: 16px; overflow: hidden; height: 73px; }
.kv { font-size: 20px; line-height: 22px; font-weight: 700; color: #5f7ab8; }
.kl { font-size: 13px; line-height: 18px; margin-top: 7px; font-weight: 700; color: #415a96; white-space: nowrap; }
.kpi.dark { background: #5f76a7; border-color: #5f76a7; }
.dark .kv, .dark .kl { color: #fff; }
.tiles { position: absolute; right: 0; bottom: 0; display: flex; gap: 5px; }
.tile { width: 32px; height: 30px; background: #fff; display: flex; align-items: center; justify-content: center; }
.tile.dots { font-size: 22px; color: #444; letter-spacing: 1px; }

.row-a { margin-top: 4px; height: 273px; display: flex; }
.row-b { margin-top: 4px; height: 301px; display: flex; }
.panel { background: #dfe9fb; border: 1px solid #d0dbee; border-radius: 7px; box-sizing: border-box; position: relative; overflow: hidden; }
.panel.left { width: 628px; }
.panel.right { width: 644px; margin-left: 3px; }
.panel.table { width: 645px; margin-left: 1px; padding-left: 9px; font-family: "Liberation Sans", "Noto Sans CJK SC", sans-serif; }
.fill { position: absolute; left: -1px; top: -1px; width: 628px; height: 273px; }
.right .fill { width: 644px; }
.tall .fill { height: 301px; }

svg text { font-family: "Liberation Sans", "Noto Sans CJK SC", sans-serif; }
.hv { font-size: 13px; text-anchor: middle; fill: #5f7ab5; font-weight: 700; }
.hl { font-size: 11px; text-anchor: middle; fill: #111; font-weight: 500; }
.ptitle { font-size: 13.400px; text-anchor: middle; fill: #3d66b4; font-weight: 700; }
.ptitle.muted { font-size: 13.400px; fill: #5a70a8; }
.leg { font-size: 9.400px; fill: #8a8a90; }
.leg.dark { fill: #555; }
.dots-h { stroke: #333; stroke-width: 1.600; stroke-dasharray: 1.600 3; fill: none; }
.dots-h.strong { stroke: #111; stroke-width: 1.800; }
.dots-v { stroke: #333; stroke-width: 1.500; stroke-dasharray: 1.500 6; fill: none; }
.bar-blue { fill: #5f81c8; stroke: #27324a; stroke-width: 1; }
.bar-grey { fill: #a4a9c8; stroke: #3a3d52; stroke-width: .7; }
.bar-over { fill: #a4a9c8; fill-opacity: .3; stroke: #2b3040; stroke-opacity: .25; stroke-width: .7; }
.bar-top { stroke: #141414; stroke-width: 1.500; }
.bar-top.faint { stroke-opacity: .5; stroke-width: 1; }
.bal { fill: none; stroke: #3b3c40; stroke-width: 3; stroke-linejoin: round; stroke-linecap: round; }
.pill { fill: #43535a; }
.pill-t { font-size: 11.500px; text-anchor: middle; fill: #101418; font-weight: 700; }
.val { font-size: 12px; text-anchor: middle; fill: #555; }
.axis { font-size: 12px; fill: #555; }
.axis.end { text-anchor: end; }
.axis.start { text-anchor: start; }
.axis.mid { text-anchor: middle; font-size: 11.500px; }

.rank-select { position: absolute; left: 12px; top: 12px; width: 127px; height: 24px; background: #ecf1fb; display: flex; align-items: center; justify-content: space-between; padding: 0 8px 0 6px; box-sizing: border-box; font-size: 13px; color: #444; z-index: 1; }
.name { font-size: 11.500px; text-anchor: end; fill: #444; }
.rank { fill: #5a7cc3; stroke: #233452; stroke-width: 1.300; }
.rv { font-size: 12px; fill: #555; }
.dotline { fill: none; stroke: #5a78bc; stroke-width: 3; stroke-dasharray: 2 3; }
.solid { fill: none; stroke: #7a7ea3; stroke-width: 3; stroke-linejoin: round; }

.t-row { display: grid; grid-template-columns: 144px 81px 110px 82px 84px 110px; width: 618px; box-sizing: border-box; font-size: 12px; color: #555; }
.t-row > span { text-align: right; padding-right: 2px; white-space: nowrap; position: relative; box-sizing: border-box; }
.t-row > .first { text-align: left; padding-left: 5px; color: #555; }
.t-head { height: 40px; align-items: center; border-bottom: 2px solid #c4cfe2; margin-top: 0; }
.t-head > span { font-size: 12px; letter-spacing: -0.15px; color: #555; overflow: visible; margin-top: -1px; }
.t-head .sorted::after { content: ""; position: absolute; left: 4px; top: 16px; border-left: 4px solid transparent; border-right: 4px solid transparent; border-top: 5px solid #222; }
.t-body { height: 221px; overflow: hidden; }
.t-body .t-row { height: 25px; line-height: 26px; border-bottom: 1px solid #c9d4e6; }
.t-body .first { border-right: 2px solid #b5bac6; height: 25px; font-size: 12px; color: #5a5a5a; }
.barcell em { font-style: normal; position: relative; }
.dbar { position: absolute; left: 6.500px; top: 5.500px; height: 13px; background: #5a7cc3; }
.dbar.alt { background: #6f81bb; left: 0; }
.line { position: absolute; left: 6px; top: 0; height: 25px; border-left: 1px dotted #333; }
.second-bar { padding-left: 0; }
.second-bar .line { left: 8.500px; }
.second-bar .dbar { left: 8.500px; }
.t-total { height: 22px; line-height: 24px; font-weight: 700; color: #222; }
.t-total > span { color: #222; }
.t-total > .first { border-right: 2px solid #b5bac6; color: #222; }
.hscroll { margin-top: 1px; height: 7px; width: 618px; background: #edf2fb; border-radius: 4px; }
.hscroll i { display: block; width: 404px; height: 7px; border-radius: 4px; background: #9ea3ae; }
.vscroll { position: absolute; left: 631px; top: 8px; width: 6px; height: 276px; background: #e6edf9; border-radius: 3px; }
.vscroll i { display: block; height: 8px; border-radius: 3px; background: #9ea3ae; }

.timer { position: absolute; left: 1448px; top: 696px; width: 62px; height: 62px; border-radius: 50%; background: linear-gradient(180deg, #1f83f0 0%, #3a96f2 55%, #8fd4f6 72%, #a5dcf6 100%); box-shadow: 0 0 0 3px rgba(255, 255, 255, .85), 0 2px 6px rgba(100, 130, 170, .35); display: flex; align-items: center; justify-content: center; color: #fff; font-size: 18px; z-index: 4; padding-bottom: 4px; box-sizing: border-box; }

.panes { width: 138px; flex: none; display: flex; background: #f4f4f1; }
.pane { display: flex; flex-direction: column; align-items: center; color: #222; padding-top: 18px; box-sizing: border-box; border-left: 1px solid #d4d4d0; }
.p-filter { width: 44px; border-left: 1px solid #aaa; }
.p-vis { width: 48px; }
.p-data { width: 46px; }
.dbl { width: 18px; height: 16px; flex: none; }
.pane b { writing-mode: vertical-rl; text-orientation: sideways; font-size: 21px; line-height: 22px; color: #1c1c1c; margin-top: 22px; font-family: "Noto Sans CJK SC", sans-serif; font-weight: 900; }
.p-filter .fun { margin-top: 22px; }
.p-filter b { margin-top: 12px; }

/* tabs */
.tabbar { height: 48px; flex: none; display: flex; background: #f3f3ee; position: relative; z-index: 1; }
.tb-view { width: 227px; flex: none; box-sizing: border-box; padding-left: 55px; display: flex; align-items: center; position: relative; }
.view-btn { width: 60px; height: 48px; display: flex; align-items: center; justify-content: center; position: relative; }
.view-btn.on::after { content: ""; position: absolute; left: 14px; right: 14px; bottom: 5px; height: 4px; border-radius: 2px; background: #117865; }
.arrow { width: 30px; display: flex; justify-content: center; margin-left: -1px; }
.page-tabs { display: flex; flex: none; }
.page-tab { width: 120px; height: 48px; background: #fff; border-right: 1px solid #d8d8d8; box-sizing: border-box; display: flex; align-items: center; justify-content: center; font-size: 16px; color: #333; position: relative; }
.page-tab.on::after { content: ""; position: absolute; left: 0; right: 0; bottom: 0; height: 5px; background: #117865; }
.page-add { width: 53px; background: #117865; color: #fff; font: 700 26px/46px "Liberation Sans", sans-serif; text-align: center; }
.tb-rest { flex: 1; }

/* status */
.status { height: 30px; flex: none; background: #f3f3ee; display: flex; align-items: center; padding-left: 5px; font-size: 16px; color: #444; border-bottom: 2px solid #111; box-sizing: content-box; }
.z-sign { width: 10px; text-align: center; color: #333; font-family: "Liberation Sans", sans-serif; margin-right: -3px; }
.z-sign.plus { margin-left: 7px; font-size: 19px; margin-right: 0; }
.slider { width: 133px; height: 1px; background: #333; margin-left: 5px; position: relative; }
.slider .thumb { position: absolute; left: 46px; top: -7px; width: 5px; height: 15px; background: #555; }
.slider .mid { position: absolute; left: 65px; top: -3px; width: 1px; height: 7px; background: #555; }
.pct { margin-left: 20px; font-size: 16px; width: 33px; color: #555; }
.fit { width: 21px; height: 20px; margin-left: 24px; margin-right: 25px; }

/* taskbar */
.taskbar { height: 65px; flex: none; background: linear-gradient(90deg, #d4deea, #d8e0ea 60%, #d3dce8); display: flex; position: relative; }
.tk-apps { display: flex; padding-left: 442px; }
.tk { width: 59.400px; height: 64px; display: flex; flex-direction: column; align-items: center; justify-content: center; position: relative; padding-bottom: 2px; box-sizing: border-box; }
.tk.act::before { content: ""; position: absolute; left: 5px; right: 4px; top: 7px; bottom: 6px; background: #e6ecf3; border-radius: 5px; box-shadow: 1px 0 1px #c8cfd8; }
.tk.wechat::before { content: ""; position: absolute; left: 3px; right: 3px; top: 5px; bottom: 5px; background: #e9b0ac; border-radius: 5px; }
.tk svg { position: relative; }
.dot { position: absolute; left: 25.500px; bottom: 7px; width: 8px; height: 4px; background: #6f7780; border-radius: 2px; }
.act .dot { left: 19px; width: 21px; background: #0f78d4; bottom: 6px; }
.wechat .dot { background: #c0322a; }
.tk-tray { position: relative; flex: 1; height: 64px; display: flex; align-items: center; margin-left: 94px; }
.t-up { width: 14px; height: 9px; }
.t-mic { width: 15px; height: 26px; margin-left: 72px; }
.t-ime { margin-left: 26px; font-size: 21px; color: #e9edf3; font-family: "Noto Sans CJK SC", sans-serif; -webkit-text-stroke: .6px #777; }
.t-sogou { width: 23px; height: 26px; margin-left: 27px; }
.t-wifi { width: 22px; height: 20px; margin-left: 30px; }
.t-vol { width: 22px; height: 20px; margin-left: 11px; }
.t-bat { width: 23px; height: 20px; margin-left: 10px; }
.clock { margin-left: 20px; text-align: right; font-size: 16px; line-height: 21px; color: #222; width: 86px; white-space: nowrap; }
.t-bell { width: 17px; height: 23px; margin-left: 10px; }
</style>

<style>
html, body { margin: 0; padding: 0; background: #fcfcf9; overflow: hidden; }
</style>
